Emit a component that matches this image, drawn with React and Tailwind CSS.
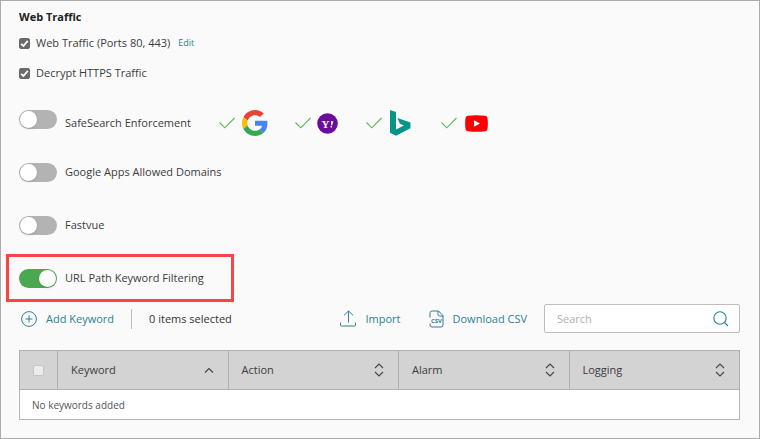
import React, { useState } from 'react';

const CheckBox = ({ id, label, children }) => (
  <div className="flex items-center h-5">
    <span className="relative flex w-[11px] h-[11px]">
      <input
        id={id}
        type="checkbox"
        defaultChecked
        className="peer appearance-none w-[11px] h-[11px] rounded-xs border border-[#6b6b6b] checked:bg-[#6b6b6b]"
      />
      <svg
        viewBox="0 0 11 11"
        className="absolute inset-0 hidden peer-checked:block pointer-events-none"
        fill="none"
        stroke="#fff"
        strokeWidth="1.8"
      >
        <path d="M2.2 5.8l2.2 2.2L8.8 2.8" />
      </svg>
    </span>
    <label htmlFor={id} className="ml-1.5">{label}</label>
    {children}
  </div>
);

const Toggle = ({ id, defaultChecked }) => (
  <span className="relative flex shrink-0">
    <input
      id={id}
      type="checkbox"
      role="switch"
      defaultChecked={defaultChecked}
      className="peer appearance-none w-[38px] h-[19px] rounded-full bg-[#b3b3b3] checked:bg-[#4aa94f] cursor-pointer"
    />
    <span className="absolute top-px left-px w-[17px] h-[17px] rounded-full bg-white shadow-sm pointer-events-none peer-checked:left-5" />
  </span>
);

const Tick = () => (
  <svg width="16" height="12" viewBox="0 0 16 12" fill="none" stroke="#5cb860" strokeWidth="1.1">
    <path d="M0.5 5.5L5.8 10.8L15.5 1" />
  </svg>
);

const GoogleIcon = () => (
  <svg width="26" height="26" viewBox="0 0 48 48" aria-label="Google">
    <path fill="#EA4335" d="M24 9.5c3.54 0 6.71 1.22 9.21 3.6l6.85-6.85C35.9 2.38 30.47 0 24 0 14.62 0 6.51 5.38 2.56 13.22l7.98 6.19C12.43 13.72 17.74 9.5 24 9.5z" />
    <path fill="#4285F4" d="M46.98 24.55c0-1.57-.15-3.09-.38-4.55H24v9.02h12.94c-.58 2.96-2.26 5.48-4.78 7.18l7.73 6c4.51-4.18 7.09-10.36 7.09-17.65z" />
    <path fill="#FBBC05" d="M10.53 28.59c-.48-1.45-.76-2.99-.76-4.59s.27-3.14.76-4.59l-7.98-6.19C.92 16.46 0 20.12 0 24c0 3.88.92 7.54 2.56 10.78l7.97-6.19z" />
    <path fill="#34A853" d="M24 48c6.48 0 11.93-2.13 15.89-5.81l-7.73-6c-2.15 1.45-4.92 2.3-8.16 2.3-6.26 0-11.57-4.22-13.47-9.91l-7.98 6.19C6.51 42.62 14.62 48 24 48z" />
  </svg>
);

const YahooIcon = () => (
  <svg width="21" height="21" viewBox="0 0 21 21" aria-label="Yahoo">
    <circle cx="10.5" cy="10.5" r="10.3" fill="#6b0d9c" />
    <text x="4.5" y="14.5" fill="#fff" fontFamily="Liberation Serif, serif" fontWeight="bold" fontSize="11">Y</text>
    <path d="M14 8l2.4.4-1.3 4.1h-.8zM13.6 13.1h1.5v1.5h-1.5z" fill="#fff" />
  </svg>
);

const BingIcon = () => (
  <svg width="21" height="26" viewBox="0 0 21 26" fill="#049588" aria-label="Bing">
    <path d="M0 0L6 2V19.6L14 15.5L9.9 13.8L7.4 8.1L20.4 12.4V18.2L6 25.8L0 22.8z" />
  </svg>
);

const YoutubeIcon = () => (
  <svg width="23" height="17" viewBox="0 0 23 17" aria-label="YouTube">
    <path
      d="M3 .8C8 .1 15 .1 20 .8c1.5.2 2.3 1 2.5 2.5.5 3 .5 7.4 0 10.4-.2 1.5-1 2.3-2.5 2.5-5 .7-12 .7-17 0C1.500 16 .7 15.2.5 13.7 0 10.7 0 6.3.5 3.3.7 1.8 1.5 1 3 .8z"
      fill="#f00"
    />
    <path d="M9 5.2l6 3.3-6 3.3z" fill="#fff" />
  </svg>
);

const PlusCircleIcon = () => (
  <svg width="16" height="16" viewBox="0 0 16 16" fill="none" stroke="currentColor">
    <circle cx="8" cy="8" r="7.4" />
    <path d="M8 4.5v7M4.5 8h7" />
  </svg>
);

const ImportIcon = () => (
  <svg width="16" height="17" viewBox="0 0 16 17" fill="none" stroke="currentColor">
    <path d="M8.5 12.5V1M4 5.3L8.5 1l4.5 4.3M.5 12.5v2.5q0 1 1 1h13q1 0 1-1v-2.5" />
  </svg>
);

const CsvIcon = () => (
  <svg width="15" height="18" viewBox="0 0 15 18" fill="none" stroke="currentColor">
    <path d="M1 7.5V3Q1 1 3 1H9.5L14 5.5V15Q14 17 12 17H3Q1 17 1 15V13.5M9 1V4.5Q9 6 10.5 6H14" />
    <text
      x="7.5"
      y="13"
      textAnchor="middle"
      fill="currentColor"
      stroke="none"
      fontFamily="Open Sans, sans-serif"
      fontWeight="bold"
      fontSize="6"
    >
      CSV
    </text>
  </svg>
);

const SearchIcon = () => (
  <svg width="16" height="16" viewBox="0 0 16 16" fill="none" stroke="currentColor" strokeWidth="1.1">
    <circle cx="7" cy="7" r="6.2" />
    <path d="M11.5 11.5l3.5 3.5" />
  </svg>
);

const SortIcon = ({ sorted }) => (
  <svg width="10" height="14" viewBox="0 0 10 14" fill="none" stroke="#444" strokeWidth="1.1">
    {sorted ? <path d="M1 9.5l4-4 4 4" /> : <path d="M1 5l4-4 4 4M1 9l4 4 4-4" />}
  </svg>
);

const searchEngines = [
  { name: 'google', icon: <GoogleIcon />, cell: 'w-[76px] gap-[7px]' },
  { name: 'yahoo', icon: <YahooIcon />, cell: 'w-[71px] gap-1.5' },
  { name: 'bing', icon: <BingIcon />, cell: 'w-[75px] gap-2' },
  { name: 'youtube', icon: <YoutubeIcon />, cell: 'gap-2' },
];

const columns = ['Keyword', 'Action', 'Alarm', 'Logging'];

export default function App() {
  const [search, setSearch] = useState('');

  return (
    <main className="border border-[#ababab] bg-[#fafafa] pt-1.5 pb-[18px] pl-[18px] pr-[19px] font-['Open_Sans',sans-serif] text-[11px] leading-5 text-[#3c3c3c]">
      <h2 className="font-bold text-[#222]">Web Traffic</h2>

      <div className="mt-1.5 flex flex-col gap-2.5">
        <CheckBox id="web-traffic" label="Web Traffic (Ports 80, 443)">
          <a href="#edit" className="ml-2 text-[9px] text-[#2b8296]">Edit</a>
        </CheckBox>
        <CheckBox id="decrypt" label="Decrypt HTTPS Traffic" />
      </div>

      <div className="mt-3 flex flex-col gap-[5px]">
        <div className="flex items-center gap-2 h-12">
          <Toggle id="safesearch" />
          <div className="flex items-center pt-2">
            <label htmlFor="safesearch" className="w-[154px]">SafeSearch Enforcement</label>
            {searchEngines.map((engine) => (
              <span key={engine.name} className={`flex items-center ${engine.cell}`}>
                <Tick />
                {engine.icon}
              </span>
            ))}
          </div>
        </div>
        <div className="flex items-center gap-2 h-12">
          <Toggle id="google-apps" />
          <label htmlFor="google-apps">Google Apps Allowed Domains</label>
        </div>
        <div className="flex items-center gap-2 h-12">
          <Toggle id="fastvue" />
          <label htmlFor="fastvue">Fastvue</label>
        </div>
        <div className="flex items-center gap-2 h-12 w-fit -ml-[13px] pl-2.5 pr-[27px] border-3 border-[#fb4444]">
          <Toggle id="url-path" defaultChecked />
          <label htmlFor="url-path">URL Path Keyword Filtering</label>
        </div>
      </div>

      <div className="mt-0.5 flex items-center text-[#2f8090]">
        <button type="button" className="flex items-center gap-[9px] pl-0.5 cursor-pointer">
          <PlusCircleIcon />
          Add Keyword
        </button>
        <span className="mx-[17px] w-px h-5 bg-[#bbb]" />
        <span className="text-[#333]">0 items selected</span>
        <button type="button" className="ml-auto flex items-center gap-[9px] cursor-pointer">
          <ImportIcon />
          Import
        </button>
        <button type="button" className="ml-7 flex items-center gap-[9px] cursor-pointer">
          <CsvIcon />
          Download CSV
        </button>
        <div className="ml-[17px] flex items-center w-[196px] h-[29px] pl-3 pr-2.5 rounded-xs border border-[#bdbdbd] bg-white">
          <input
            type="text"
            aria-label="Search"
            placeholder="Search"
            value={search}
            onChange={(e) => setSearch(e.target.value)}
            className="flex-1 min-w-0 outline-none text-[#444] placeholder:text-[#b0b0b0]"
          />
          <button type="button" aria-label="Run search" className="cursor-pointer">
            <SearchIcon />
          </button>
        </div>
      </div>

      <table className="mt-[17px] w-full table-fixed border-collapse border border-[#b5b5b5]">
        <thead>
          <tr className="h-[39px] bg-[#d3d3d3]">
            <th className="w-[38px] border border-[#b0b0b0]">
              <input
                type="checkbox"
                aria-label="Select all keywords"
                className="block mx-auto appearance-none w-[11px] h-[11px] rounded-xs border border-[#c4c4c4] bg-[#ececec]"
              />
            </th>
            {columns.map((name, i) => (
              <th key={name} className="border border-[#b0b0b0] pl-[13px] pr-3.5 font-normal">
                <div className="flex items-center justify-between">
                  {name}
                  <SortIcon sorted={i === 0} />
                </div>
              </th>
            ))}
          </tr>
        </thead>
        <tbody>
          <tr className="h-[30px] bg-white">
            <td colSpan={5} className="pl-3 text-[10px] text-[#555]">No keywords added</td>
          </tr>
        </tbody>
      </table>
    </main>
  );
}
